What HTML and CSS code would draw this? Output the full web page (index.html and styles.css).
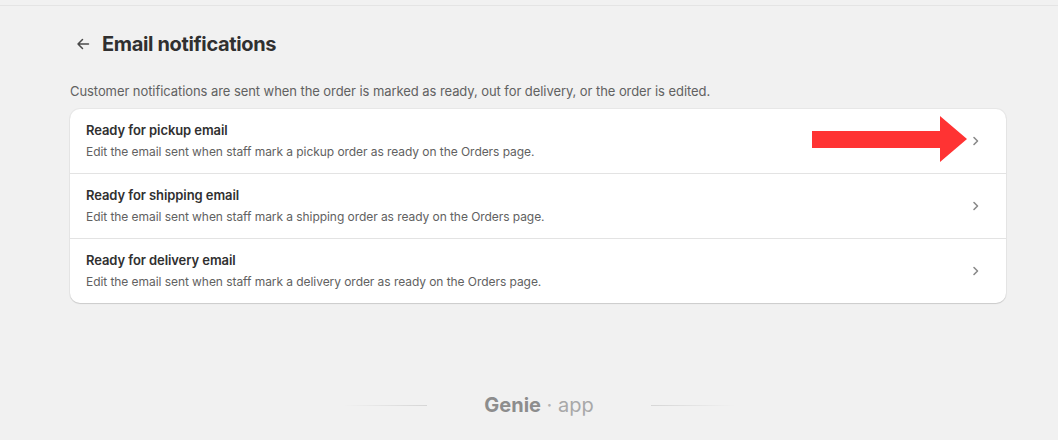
FILE: index.html
```html
<!DOCTYPE html>
<html>
<head>
<meta charset="utf-8">
<link rel="stylesheet" href="styles.css">
</head>
<body>
<div class="topline"></div>
<main class="page">
  <header class="header">
    <span class="back" aria-hidden="true">
      <svg width="14" height="14" viewBox="0 0 14 14"><path d="M12.5 7H2M6.5 2.5L2 7l4.5 4.5" fill="none" stroke="#4a4a4a" stroke-width="1.5" stroke-linecap="round" stroke-linejoin="round"/></svg>
    </span>
    <h1 class="title">Email notifications</h1>
  </header>
  <p class="intro">Customer notifications are sent when the order is marked as ready, out for delivery, or the order is edited.</p>
  <section class="card">
    <div class="row">
      <div class="row-text">
        <div class="row-title">Ready for pickup email</div>
        <div class="row-desc">Edit the email sent when staff mark a pickup order as ready on the Orders page.</div>
      </div>
      <span class="chev"><svg width="8" height="10" viewBox="0 0 8 10"><path d="M2 1.5L5.5 5 2 8.5" fill="none" stroke="#8a8a8a" stroke-width="1.6" stroke-linecap="round" stroke-linejoin="round"/></svg></span>
      <svg class="red-arrow" width="160" height="48" viewBox="0 0 160 48"><polygon points="0,15 128,15 128,0 155,23 128,46 128,32 0,32" fill="#ff3333"/></svg>
    </div>
    <div class="row">
      <div class="row-text">
        <div class="row-title">Ready for shipping email</div>
        <div class="row-desc">Edit the email sent when staff mark a shipping order as ready on the Orders page.</div>
      </div>
      <span class="chev"><svg width="8" height="10" viewBox="0 0 8 10"><path d="M2 1.5L5.5 5 2 8.5" fill="none" stroke="#8a8a8a" stroke-width="1.6" stroke-linecap="round" stroke-linejoin="round"/></svg></span>
    </div>
    <div class="row">
      <div class="row-text">
        <div class="row-title">Ready for delivery email</div>
        <div class="row-desc">Edit the email sent when staff mark a delivery order as ready on the Orders page.</div>
      </div>
      <span class="chev"><svg width="8" height="10" viewBox="0 0 8 10"><path d="M2 1.5L5.5 5 2 8.5" fill="none" stroke="#8a8a8a" stroke-width="1.6" stroke-linecap="round" stroke-linejoin="round"/></svg></span>
    </div>
  </section>
</main>
<footer class="footer">
  <span class="fline fline-left"></span>
  <span class="brand"><b>Genie</b> <span class="dot">·</span> <span class="app">app</span></span>
  <span class="fline fline-right"></span>
</footer>
</body>
</html>
```
FILE: styles.css
```css
html, body {
  margin: 0;
  padding: 0;
  background: #f1f1f1;
  font-family: Inter, "Noto Sans", sans-serif;
  color: #303030;
}
body {
  width: 1058px;
  height: 440px;
  overflow: hidden;
}
.topline {
  height: 1px;
  margin-top: 5px;
  background: #e4e4e4;
}
.page {
  padding: 0 52px 0 70px;
}
.header {
  display: flex;
  align-items: center;
  height: 34px;
  margin-top: 21px;
  padding-left: 6px;
  gap: 12px;
}
.back {
  display: flex;
  width: 14px;
  height: 14px;
}
.title {
  margin: 0;
  font-size: 20px;
  font-weight: 700;
  letter-spacing: -0.35px;
  color: #303030;
}
.intro {
  margin: 22px 0 0;
  font-size: 13px;
  letter-spacing: -0.07px;
  line-height: 16px;
  color: #616161;
}
.card {
  margin-top: 10px;
  background: #fff;
  border-radius: 10px;
  box-shadow: 0 1px 1px rgba(0,0,0,0.12), 0 0 0 1px rgba(0,0,0,0.04);
}
.row {
  position: relative;
  display: flex;
  align-items: center;
  height: 64px;
  padding: 0 26px 0 16px;
  border-top: 1px solid #e3e3e3;
}
.row:first-child {
  border-top: none;
}
.row-text {
  flex: 1;
}
.row-title {
  font-size: 13px;
  font-weight: 600;
  letter-spacing: -0.08px;
  line-height: 16px;
  color: #303030;
}
.row-desc {
  margin-top: 6px;
  font-size: 12px;
  letter-spacing: -0.06px;
  line-height: 16px;
  color: #616161;
}
.chev {
  display: flex;
  width: 8px;
  height: 10px;
}
.red-arrow {
  position: absolute;
  left: 742px;
  top: 7px;
}
.footer {
  position: absolute;
  left: 0;
  top: 392px;
  width: 1058px;
  box-sizing: border-box;
  padding-left: 20px;
  display: flex;
  align-items: center;
  justify-content: center;
  height: 26px;
}
.fline {
  display: block;
  width: 84px;
  height: 1px;
}
.fline-left {
  background: linear-gradient(to right, rgba(200,200,200,0), #d6d6d6);
  margin-right: 57px;
}
.fline-right {
  background: linear-gradient(to left, rgba(200,200,200,0), #d6d6d6);
  margin-left: 57px;
}
.brand {
  font-size: 20px;
  color: #8d8d8d;
}
.brand b {
  font-weight: 700;
  color: #8d8d8d;
}
.dot {
  color: #b5b5b5;
}
.app {
  color: #a8a8a8;
}
```
